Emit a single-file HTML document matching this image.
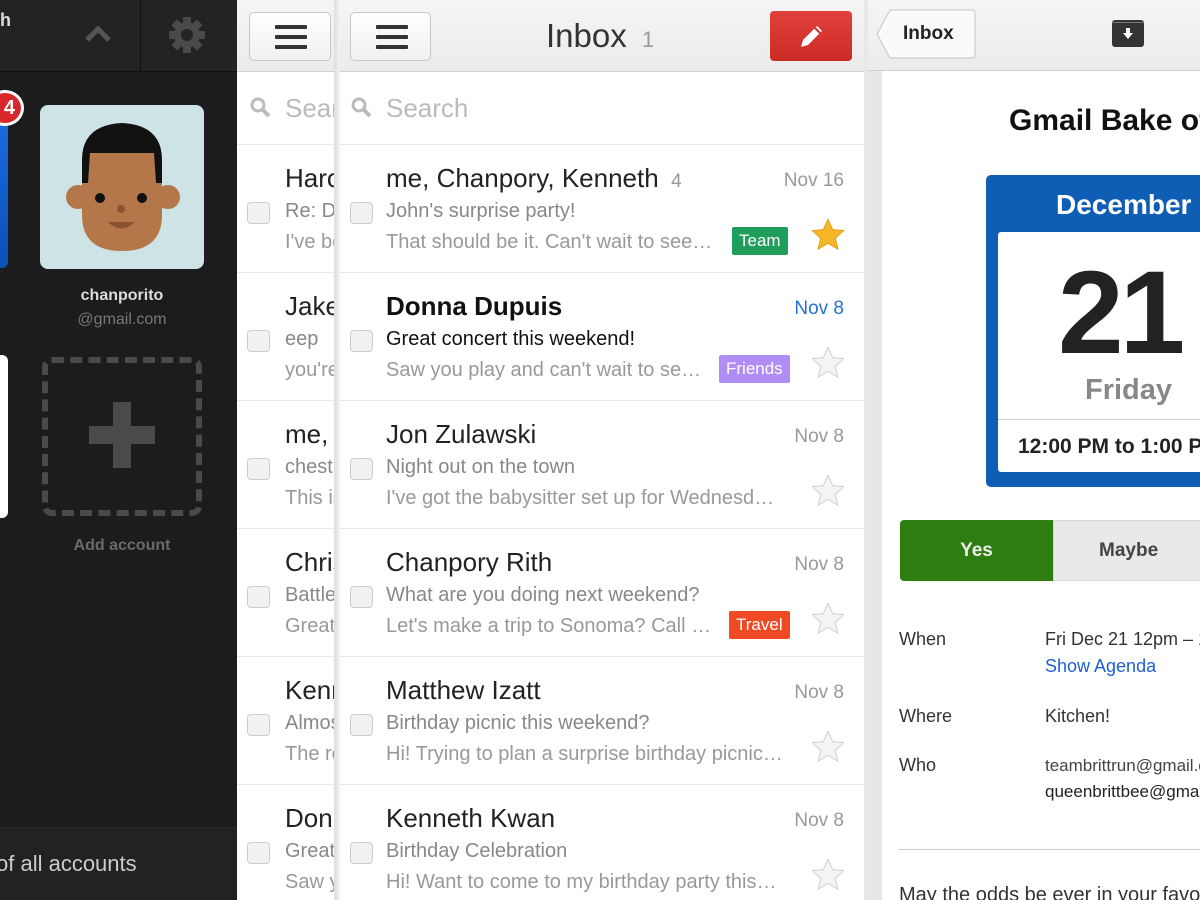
<!DOCTYPE html>
<html><head><style>
*{margin:0;padding:0;box-sizing:border-box}
body{width:1200px;height:900px;overflow:hidden;position:relative;background:#fff;font-family:"Liberation Sans",sans-serif}
.a{position:absolute;white-space:nowrap}
.pane{position:absolute;top:0;height:900px;overflow:hidden;background:#fff}
.hdr{position:absolute;left:0;top:0;right:0;height:72px;background:linear-gradient(#f5f5f5,#ebebeb);border-bottom:1px solid #cfcfcf}
.btn{position:absolute;top:12px;width:82px;height:49px;background:linear-gradient(#fff,#f1f1f1);border:1px solid #c8c8c8;border-radius:5px}
.ham{position:absolute;left:25px;width:32px;height:4px;background:#333;border-radius:1px}
.row{position:absolute;left:0;right:0;height:128px;border-bottom:1px solid #e6e6e6}
.row div{white-space:nowrap}
.nm{position:absolute;left:46px;top:18px;font-size:26px;color:#222}
.sb{position:absolute;left:46px;top:55px;font-size:20px;color:#888}
.pv{position:absolute;left:46px;top:86px;font-size:20px;color:#999}
.cb{position:absolute;left:10px;top:57px;width:23px;height:22px;border:1px solid #ccc;border-radius:4px;background:#f1f1f1}
.dt{position:absolute;right:20px;top:25px;font-size:19px;color:#999}
.tag{position:absolute;top:82px;height:28px;padding:0 7px;font-size:17px;line-height:28px;color:#fff;border-radius:2px}
.star{position:absolute;right:18px;top:72px}
</style></head><body>

<!-- dark accounts pane -->
<div class="pane" style="left:0;width:237px;background:#1c1c1e">
 <div class="a" style="left:0;top:0;width:237px;height:72px;background:#232325;border-bottom:1px solid #111"></div>
 <div class="a" style="left:0;top:10px;font-size:18px;font-weight:bold;color:#ddd">h</div>
 <div class="a" style="left:140px;top:0;width:1px;height:72px;background:#111"></div>
 <svg class="a" style="left:84px;top:24px" width="28" height="20"><path d="M3 16 L14 5 L25 16" stroke="#555" stroke-width="5" fill="none"/></svg>
 <svg class="a" style="left:168px;top:16px" width="38" height="38" viewBox="0 0 38 38"><g fill="#4a4a4a"><circle cx="19" cy="19" r="13"/><rect x="15" y="1" width="8" height="36" rx="1"/><rect x="15" y="1" width="8" height="36" rx="1" transform="rotate(45 19 19)"/><rect x="15" y="1" width="8" height="36" rx="1" transform="rotate(90 19 19)"/><rect x="15" y="1" width="8" height="36" rx="1" transform="rotate(135 19 19)"/></g><circle cx="19" cy="19" r="6" fill="#232325"/></svg>
 <div class="a" style="left:0;top:118px;width:8px;height:150px;background:linear-gradient(#1a6be0,#0b4fb8);border-radius:0 6px 6px 0"></div>
 <div class="a" style="left:-14px;top:90px;width:38px;height:36px;border-radius:50%;background:#d8262a;border:3px solid #fff;color:#fff;font-weight:bold;font-size:20px;line-height:30px;text-align:right;padding-right:6px">4</div>
 <div class="a" style="left:40px;top:105px;width:164px;height:164px;background:#cde3e6;border-radius:8px;overflow:hidden">
  <svg width="164" height="164" viewBox="0 0 164 164">
   <ellipse cx="38" cy="92" rx="12" ry="12" fill="#b3774a"/><ellipse cx="128" cy="92" rx="12" ry="12" fill="#b3774a"/>
   <path d="M42 60 Q42 20 82 20 Q122 20 122 60 L122 110 Q122 146 82 146 Q42 146 42 110Z" fill="#b3774a"/>
   <path d="M42 78 L42 55 Q42 20 82 18 Q122 20 122 55 L122 78 L116 78 L114 48 L50 48 L48 78Z" fill="#111"/>
   <circle cx="60" cy="93" r="5" fill="#111"/><circle cx="102" cy="93" r="5" fill="#111"/>
   <circle cx="81" cy="104" r="4" fill="#8a5333"/>
   <path d="M68 117 Q81 130 95 117Z" fill="#8a5333"/>
  </svg>
 </div>
 <div class="a" style="left:40px;width:164px;top:287px;text-align:center;font-size:16px;font-weight:bold;color:#ddd">chanporito</div>
 <div class="a" style="left:40px;width:164px;top:311px;text-align:center;font-size:16px;color:#777">@gmail.com</div>
 <div class="a" style="left:0;top:355px;width:8px;height:163px;background:#fff;border-radius:0 6px 6px 0"></div>
 <div class="a" style="left:42px;top:357px;width:160px;height:159px;border:6px dashed #4a4a4a;border-radius:10px"></div>
 <div class="a" style="left:89px;top:426px;width:66px;height:18px;background:#4a4a4a"></div>
 <div class="a" style="left:113px;top:402px;width:18px;height:66px;background:#4a4a4a"></div>
 <div class="a" style="left:40px;width:164px;top:537px;text-align:center;font-size:16px;font-weight:bold;color:#6a6a6a">Add account</div>
 <div class="a" style="left:0;top:827px;width:237px;height:73px;background:#222224;border-top:1px solid #2c2c2e"></div>
 <div class="a" style="left:-4px;top:851px;font-size:22px;color:#ccc">of all accounts</div>
</div>

<!-- second (behind) pane -->
<div class="pane" style="left:237px;width:100px">
 <div class="hdr"></div>
 <div class="btn" style="left:12px"><div class="ham" style="top:12px"></div><div class="ham" style="top:22px"></div><div class="ham" style="top:32px"></div></div>
 <svg class="a" style="left:12px;top:96px" width="24" height="24"><circle cx="9" cy="9" r="6" stroke="#bbb" stroke-width="3" fill="none"/><path d="M13 13 L20 20" stroke="#bbb" stroke-width="4"/></svg>
 <div class="a" style="left:48px;top:93px;font-size:26px;color:#bbb">Search</div>
 <div class="a" style="left:0;right:0;top:144px;height:1px;background:#e6e6e6"></div>
 <div class="row" style="top:145px;left:0"><div class="cb"></div><div class="nm" style="left:48px">Harold</div><div class="sb" style="left:48px">Re: Dinner</div><div class="pv" style="left:48px">I've been</div></div>
 <div class="row" style="top:273px"><div class="cb"></div><div class="nm" style="left:48px">Jake</div><div class="sb" style="left:48px">eep</div><div class="pv" style="left:48px">you're</div></div>
 <div class="row" style="top:401px"><div class="cb"></div><div class="nm" style="left:48px">me, C</div><div class="sb" style="left:48px">chest</div><div class="pv" style="left:48px">This is</div></div>
 <div class="row" style="top:529px"><div class="cb"></div><div class="nm" style="left:48px">Chris</div><div class="sb" style="left:48px">Battle</div><div class="pv" style="left:48px">Great</div></div>
 <div class="row" style="top:657px"><div class="cb"></div><div class="nm" style="left:48px">Kenneth</div><div class="sb" style="left:48px">Almost</div><div class="pv" style="left:48px">The re</div></div>
 <div class="row" style="top:785px"><div class="cb"></div><div class="nm" style="left:48px">Donna</div><div class="sb" style="left:48px">Great</div><div class="pv" style="left:48px">Saw you</div></div>
</div>
<div class="a" style="left:334px;top:0;width:6px;height:900px;background:linear-gradient(90deg,#ddd,#f4f4f4)"></div>

<!-- main inbox pane -->
<div class="pane" style="left:340px;width:524px">
 <div class="hdr"></div>
 <div class="btn" style="left:10px;width:81px"><div class="ham" style="top:12px"></div><div class="ham" style="top:22px"></div><div class="ham" style="top:32px"></div></div>
 <div class="a" style="left:206px;top:17px;font-size:33px;color:#333">Inbox <span style="font-size:22px;color:#999">&nbsp;1</span></div>
 <div class="a" style="left:430px;top:11px;width:82px;height:50px;background:linear-gradient(#e2403a,#cc2a24);border-radius:4px"></div>
 <svg class="a" style="left:455px;top:21px" width="32" height="32" viewBox="0 0 32 32"><path d="M6 26 L8 19 L22 5 L27 10 L13 24Z" fill="#fff"/><path d="M20 7 L25 12" stroke="#cc2a24" stroke-width="2"/></svg>
 <svg class="a" style="left:10px;top:96px" width="24" height="24"><circle cx="9" cy="9" r="6" stroke="#bbb" stroke-width="3" fill="none"/><path d="M13 13 L20 20" stroke="#bbb" stroke-width="4"/></svg>
 <div class="a" style="left:46px;top:93px;font-size:26px;color:#bbb">Search</div>
 <div class="a" style="left:0;right:0;top:144px;height:1px;background:#e6e6e6"></div>

 <div class="row" style="top:145px"><div class="cb"></div><div class="nm">me, Chanpory, Kenneth <span style="font-size:19px;color:#999">&nbsp;4</span></div><div class="dt">Nov 16</div><div class="sb">John's surprise party!</div><div class="pv">That should be it. Can't wait to see…</div><div class="tag" style="left:392px;background:#1e9e5a">Team</div>
  <svg class="star" width="36" height="36" viewBox="0 0 24 24"><path d="M12 1.5l3.1 6.9 7.4.7-5.6 5 1.7 7.4L12 17.6 5.4 21.5l1.7-7.4-5.6-5 7.4-.7z" fill="#f7b528" stroke="#e39a10" stroke-width=".6"/></svg></div>
 <div class="row" style="top:273px"><div class="cb"></div><div class="nm" style="font-weight:bold;color:#111">Donna Dupuis</div><div class="dt" style="color:#2a6fd6">Nov 8</div><div class="sb" style="color:#111">Great concert this weekend!</div><div class="pv">Saw you play and can't wait to se…</div><div class="tag" style="left:379px;background:#b08cf5">Friends</div>
  <svg class="star" width="36" height="36" viewBox="0 0 24 24"><path d="M12 1.5l3.1 6.9 7.4.7-5.6 5 1.7 7.4L12 17.6 5.4 21.5l1.7-7.4-5.6-5 7.4-.7z" fill="#f4f4f4" stroke="#ccc" stroke-width=".6"/></svg></div>
 <div class="row" style="top:401px"><div class="cb"></div><div class="nm">Jon Zulawski</div><div class="dt">Nov 8</div><div class="sb">Night out on the town</div><div class="pv">I've got the babysitter set up for Wednesd…</div>
  <svg class="star" width="36" height="36" viewBox="0 0 24 24"><path d="M12 1.5l3.1 6.9 7.4.7-5.6 5 1.7 7.4L12 17.6 5.4 21.5l1.7-7.4-5.6-5 7.4-.7z" fill="#f4f4f4" stroke="#ccc" stroke-width=".6"/></svg></div>
 <div class="row" style="top:529px"><div class="cb"></div><div class="nm">Chanpory Rith</div><div class="dt">Nov 8</div><div class="sb">What are you doing next weekend?</div><div class="pv">Let's make a trip to Sonoma? Call …</div><div class="tag" style="left:389px;background:#f04a24">Travel</div>
  <svg class="star" width="36" height="36" viewBox="0 0 24 24"><path d="M12 1.5l3.1 6.9 7.4.7-5.6 5 1.7 7.4L12 17.6 5.4 21.5l1.7-7.4-5.6-5 7.4-.7z" fill="#f4f4f4" stroke="#ccc" stroke-width=".6"/></svg></div>
 <div class="row" style="top:657px"><div class="cb"></div><div class="nm">Matthew Izatt</div><div class="dt">Nov 8</div><div class="sb">Birthday picnic this weekend?</div><div class="pv">Hi! Trying to plan a surprise birthday picnic…</div>
  <svg class="star" width="36" height="36" viewBox="0 0 24 24"><path d="M12 1.5l3.1 6.9 7.4.7-5.6 5 1.7 7.4L12 17.6 5.4 21.5l1.7-7.4-5.6-5 7.4-.7z" fill="#f4f4f4" stroke="#ccc" stroke-width=".6"/></svg></div>
 <div class="row" style="top:785px"><div class="cb"></div><div class="nm">Kenneth Kwan</div><div class="dt">Nov 8</div><div class="sb">Birthday Celebration</div><div class="pv">Hi! Want to come to my birthday party this…</div>
  <svg class="star" width="36" height="36" viewBox="0 0 24 24"><path d="M12 1.5l3.1 6.9 7.4.7-5.6 5 1.7 7.4L12 17.6 5.4 21.5l1.7-7.4-5.6-5 7.4-.7z" fill="#f4f4f4" stroke="#ccc" stroke-width=".6"/></svg></div>
</div>
<div class="a" style="left:864px;top:0;width:4px;height:900px;background:#e8e8e8"></div>

<!-- detail pane -->
<div class="pane" style="left:868px;width:332px">
 <div class="hdr" style="height:71px"></div>
 <svg class="a" style="left:8px;top:9px" width="100" height="50"><path d="M14 1 L96 1 Q99 1 99 4 L99 46 Q99 49 96 49 L14 49 L1 25Z" fill="#fafafa" stroke="#c4c4c4"/></svg>
 <div class="a" style="left:35px;top:23px;font-size:19px;font-weight:bold;color:#222">Inbox</div>
 <div class="a" style="left:244px;top:20px;width:32px;height:27px;background:#333;border-radius:3px"></div>
 <div class="a" style="left:244px;top:22px;width:32px;height:1px;background:#777"></div>
 <svg class="a" style="left:252px;top:26px" width="16" height="16"><path d="M6 2h4v5h3l-5 6-5-6h3z" fill="#fff"/></svg>
 <div class="a" style="left:0;top:71px;width:14px;height:829px;background:#e6e6e6"></div>
 <div class="a" style="left:141px;top:104px;font-size:30px;font-weight:bold;color:#111">Gmail Bake off</div>
 <div class="a" style="left:118px;top:175px;width:240px;height:312px;background:#0f5eb5;border-radius:5px"></div>
 <div class="a" style="left:188px;top:189px;font-size:28px;font-weight:bold;color:#fff">December</div>
 <div class="a" style="left:130px;top:232px;width:220px;height:240px;background:#fff;border-radius:3px"></div>
 <div class="a" style="left:190px;top:245px;font-size:118px;font-weight:bold;color:#222;letter-spacing:-4px">21</div>
 <div class="a" style="left:217px;top:374px;font-size:29px;font-weight:bold;color:#888">Friday</div>
 <div class="a" style="left:130px;top:419px;width:220px;height:1px;background:#ccc"></div>
 <div class="a" style="left:150px;top:435px;font-size:21px;font-weight:bold;color:#222">12:00 PM to 1:00 PM</div>
 <div class="a" style="left:32px;top:520px;width:153px;height:61px;background:#2d7d11;border-radius:4px 0 0 4px;color:#eee;font-size:19px;font-weight:bold;text-align:center;line-height:61px">Yes</div>
 <div class="a" style="left:185px;top:520px;width:160px;height:61px;background:#e9e9e9;border:1px solid #d6d6d6;color:#444;font-size:19px;font-weight:bold;line-height:59px;padding-left:45px">Maybe</div>
 <div class="a" style="left:31px;top:629px;font-size:18px;color:#333">When</div>
 <div class="a" style="left:177px;top:629px;font-size:18px;color:#333">Fri Dec 21 12pm – 1pm</div>
 <div class="a" style="left:177px;top:656px;font-size:18px;color:#1f5fd6">Show Agenda</div>
 <div class="a" style="left:31px;top:706px;font-size:18px;color:#333">Where</div>
 <div class="a" style="left:177px;top:706px;font-size:18px;color:#333">Kitchen!</div>
 <div class="a" style="left:31px;top:755px;font-size:18px;color:#333">Who</div>
 <div class="a" style="left:177px;top:756px;font-size:17px;color:#444">teambrittrun@gmail.com</div>
 <div class="a" style="left:177px;top:782px;font-size:17px;color:#222">queenbrittbee@gmail.com</div>
 <div class="a" style="left:31px;top:849px;width:320px;height:1px;background:#ccc"></div>
 <div class="a" style="left:31px;top:884px;font-size:20px;color:#333">May the odds be ever in your favor</div>
</div>
</body></html>
